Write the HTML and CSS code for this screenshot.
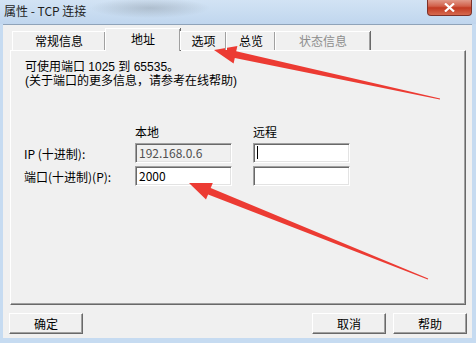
FILE: index.html
```html
<!DOCTYPE html>
<html lang="zh-CN">
<head>
<meta charset="UTF-8">
<title>属性 - TCP 连接</title>
<link rel="stylesheet" href="styles.css">
</head>
<body>

<div class="window">
  <div class="titlebar">
    <span class="title">属性 - TCP 连接</span>
    <span class="close-btn">
      <svg width="11" height="9" viewBox="0 0 11 9"><path d="M1 0.5 L10 8.5 M10 0.5 L1 8.5" stroke="#fff" stroke-width="2.2"/></svg>
    </span>
  </div>

  <div class="client">
    <div class="tabs">
      <div class="tab tab-general">常规信息</div>
      <div class="tab tab-address active">地址</div>
      <div class="tab tab-options">选项</div>
      <div class="tab tab-summary">总览</div>
      <div class="tab tab-status disabled">状态信息</div>
    </div>

    <div class="panel">
      <p class="note">可使用端口 1025 到 65535。</p>
      <p class="note">(关于端口的更多信息，请参考在线帮助)</p>

      <div class="form">
        <span></span>
        <span class="col-head">本地</span>
        <span class="col-head">远程</span>

        <label>IP (十进制):</label>
        <div class="field disabled">192.168.0.6</div>
        <div class="field"><span class="caret"></span></div>

        <label>端口(十进制)(P):</label>
        <div class="field">2000</div>
        <div class="field"></div>
      </div>
    </div>

    <div class="buttons">
      <button class="btn">确定</button>
      <button class="btn push-right">取消</button>
      <button class="btn">帮助</button>
    </div>
  </div>

  <!-- red arrows drawn over the screenshot -->
  <svg class="marks" width="476" height="343" viewBox="0 0 476 343">
    <polygon points="214,50 237.4,45.9 236.2,51.3 440.1,98.5 439.9,99.5 234.8,58.1 233.6,63.5" fill="#ec3b33"/>
    <polygon points="189,183 212.8,182.9 210.7,188 428.2,278.5 427.8,279.5 208.1,194.5 206,199.6" fill="#ec3b33"/>
  </svg>
</div>

</body>
</html>
```

FILE: styles.css
```css
body {
  margin: 0;
  width: 476px;
  height: 343px;
  overflow: hidden;
  background: #c6dbf1;
  font-family: "Noto Sans CJK SC", "Liberation Sans", sans-serif;
  font-size: 12px;
  color: #000;
}

.window {
  position: relative;
  height: 343px;
  display: flex;
  flex-direction: column;
}

.titlebar {
  height: 24px;
  flex: 0 0 auto;
  display: flex;
  align-items: center;
  padding-left: 4px;
  background:
    radial-gradient(ellipse 60px 10px at 150px 8px, rgba(120, 130, 140, 0.35), transparent),
    linear-gradient(180deg, #d2e3f4 0%, #c0d6ee 100%);
}

.title {
  font-size: 12px;
  color: #1e1e1e;
  margin-top: -4px;
}

.close-btn {
  margin-left: auto;
  margin-right: 4px;
  margin-top: -9px;
  width: 43px;
  height: 16px;
  display: flex;
  align-items: center;
  justify-content: center;
  border: 1px solid #7d3128;
  border-top: none;
  border-radius: 0 0 4px 4px;
  background: linear-gradient(180deg, #e4a293 0%, #d1604a 45%, #c23a22 55%, #d66a4f 100%);
}

.client {
  flex: 1;
  margin: 0 4px 5px 3px;
  border-top: 1px solid #8fa3b9;
  background: #f0f0f0;
  padding: 3px 0 0 7px;
}

/* tab strip */
.tabs {
  display: flex;
  align-items: flex-end;
  height: 22px;
  padding-left: 2px;
  position: relative;
  z-index: 1;
}

.tab {
  height: 19px;
  line-height: 17px;
  text-align: center;
  border-top: 1px solid #fff;
  border-left: 1px solid #fff;
  box-shadow: inset -1px 0 #a0a0a0, 1px 0 #696969;
  box-sizing: border-box;
}

.tab-general { width: 93px; }
.tab-address { width: 75px; }
.tab-options { width: 46px; }
.tab-summary { width: 49px; }
.tab-status { width: 95px; }

.tab.active {
  height: 23px;
  line-height: 20px;
  margin-bottom: -1px;
  background: #f0f0f0;
}

.tab.disabled {
  color: #8d8d8d;
}

/* tab page */
.panel {
  width: 456px;
  height: 255px;
  box-sizing: border-box;
  border-top: 1px solid #fff;
  border-left: 1px solid #fff;
  border-right: 1px solid #696969;
  border-bottom: 1px solid #696969;
  box-shadow: inset -1px -1px #a0a0a0;
  padding: 9px 0 0 14px;
}

.note {
  margin: 0;
  font-family: "Liberation Sans", "Noto Sans CJK SC", sans-serif;
  line-height: 14px;
  height: 14px;
}

.form {
  display: grid;
  grid-template-columns: 90px 97px 97px;
  grid-template-rows: 15px 20px 20px;
  column-gap: 21px;
  row-gap: 3px;
  margin-top: 37px;
  margin-left: -1px;
}

.form label {
  align-self: center;
}

.col-head {
  line-height: 14px;
}

.field {
  box-sizing: border-box;
  height: 20px;
  line-height: 17px;
  padding-left: 3px;
  background: #fff;
  border: 1px solid;
  border-color: #a0a0a0 #fff #fff #a0a0a0;
  box-shadow: inset 1px 1px #696969, inset -1px -1px #e3e3e3;
}

.field.disabled {
  background: #f0f0f0;
  color: #505050;
}

.caret {
  display: inline-block;
  width: 1px;
  height: 13px;
  margin-top: 2px;
  background: #000;
  vertical-align: top;
}

/* bottom buttons */
.buttons {
  display: flex;
  gap: 7px;
  margin-top: 8px;
  margin-left: -1px;
  width: 458px;
}

.btn {
  width: 74px;
  height: 21px;
  padding: 0;
  font: inherit;
  background: #f0f0f0;
  border: 1px solid;
  border-color: #fff #696969 #696969 #fff;
  box-shadow: inset -1px -1px #a0a0a0;
  color: #000;
}

.push-right {
  margin-left: auto;
}

.marks {
  position: absolute;
  left: 0;
  top: 0;
  pointer-events: none;
}
```
